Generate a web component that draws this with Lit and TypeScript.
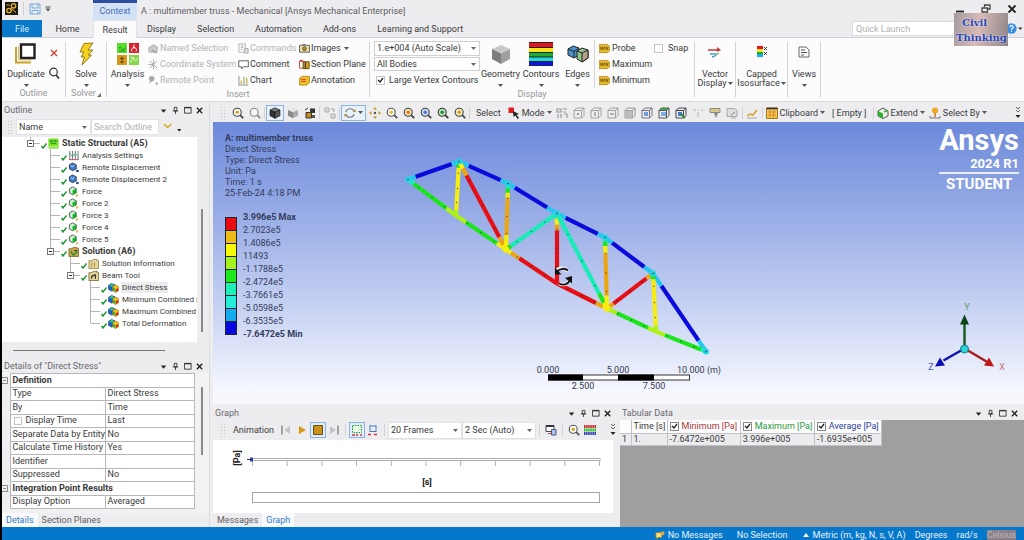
import { LitElement, html, svg, css, nothing } from "lit";
import { customElement } from "lit/decorators.js";
import { classMap } from "lit/directives/class-map.js";

const small = (body: unknown, size = 12) =>
  html`<svg class="ic" width=${size} height=${size} viewBox="0 0 12 12" fill="none" aria-hidden="true">${body}</svg>`;
const big = (body: unknown) =>
  html`<svg class="ic" width="24" height="24" viewBox="0 0 24 24" fill="none" aria-hidden="true">${body}</svg>`;
const caret = html`<svg class="caret" width="5" height="3" viewBox="0 0 5 3" aria-hidden="true"><path d="M0 0h5L2.5 3z" fill="#555" /></svg>`;

const lens = (stroke: string, fill: string, mark: unknown = nothing) => svg`
  <circle cx="5.2" cy="5.2" r="4" fill=${fill} stroke=${stroke} stroke-width="1.1"/>
  <path d="M8.2 8.2l3 3" stroke=${stroke} stroke-width="1.8"/>${mark}`;
const cube = (top: string, left: string, right: string, edge = "none") => svg`
  <path d="M6 .8L11 3 6 5.3 1 3z" fill=${top} stroke=${edge} stroke-width=".6"/>
  <path d="M1 3l5 2.3v6L1 8.8z" fill=${left} stroke=${edge} stroke-width=".6"/>
  <path d="M11 3L6 5.3v6l5-2.5z" fill=${right} stroke=${edge} stroke-width=".6"/>`;
const wire = (c: string, mark: unknown = nothing) => svg`
  <path d="M1 3.5L3.5 1H11v7.5L8.500 11H1zM1 3.500h7.500V11M8.500 3.500L11 1" stroke=${c} stroke-width=".9"/>${mark}`;
const tag = svg`<path d="M.5 1.500h9l2 2v5l-2 2h-9z" fill="#e9b92c" stroke="#a97c00" stroke-width=".7"/>
  <path d="M2 4.200v3.500M3.500 7.700V4.200l1.500 2 1.500-2v3.500M8 4.200l2 3.500M10 4.200L8 7.700" stroke="#5a4200" stroke-width=".8"/>`;

const I = {
  named: svg`<path d="M1 5l5-3 4 2v6H1z" fill="#ccc" stroke="#aaa"/><path d="M4 7l5 4" stroke="#888"/>`,
  coord: svg`<path d="M2 2l8 8M10 2L2 10M6 .5V11M.5 6h5" stroke="#a5a5a5"/>`,
  remote: svg`<circle cx="4" cy="4" r="3" fill="#aaa"/><path d="M1 9l4-3" stroke="#999"/><circle cx="9.500" cy="9.500" r="1.500" fill="#b5b5b5"/>`,
  commands: svg`<path d="M1 1h7v9H1zM3 3h3M3 5h3M3 7h2" stroke="#b0b0b0"/><path d="M7 6h4v5H7z" fill="#ddd" stroke="#aaa"/>`,
  comment: svg`<path d="M.8 2h10.500v6.500H6L4 10.800V8.500H.8z" fill="#fff" stroke="#555"/>`,
  chart: svg`<path d="M1 1v10h10" stroke="#888"/><path d="M3.500 6v4M9.500 3v7" stroke="#c9a94a" stroke-width="1.400"/><path d="M6.500 2v8" stroke="#9fb26a" stroke-width="1.400"/>`,
  images: svg`<path d="M.6 2.500h10.800v7.500H.6z" fill="#f1e3b0" stroke="#555"/><circle cx="6" cy="6.200" r="2.200" fill="#b38f1e" stroke="#444" stroke-width=".7"/><path d="M4 1.500h3" stroke="#555"/>`,
  section: svg`<path d="M.6 2.500h5v7.500h-5z" fill="#fff" stroke="#c33"/><path d="M4.500 3h6.500v7.500H4.500z" fill="#d9a520" stroke="#5a4200"/><path d="M7 3.500v6.500" stroke="#333" stroke-width="1.400"/><path d="M1 1.500h3" stroke="#c00"/>`,
  annot: svg`<path d="M.6 3.500l3-2h7.800v7l-3 2.500H.6z" fill="#f0c022" stroke="#a97c00" stroke-width=".8"/><path d="M2.500 5h5M2.500 7h5" stroke="#c33"/>`,
  steps: svg`<path d="M2 1v10M5 1v10M8 1v10M11 1v10" stroke="#667"/><path d="M1 3l4 4 3-3 3 3" stroke="#3a6"/><path d="M1 10.500h10.500" stroke="#b55"/>`,
  disp: svg`<path d="M1.500 3L5 1l4 2v4.500L5 9.500 1.500 7.500z" fill="#3f7fd0" stroke="#222" stroke-width=".8"/><path d="M3 4l2 1 2-1" stroke="#cfe3ff"/><path d="M9 8.500h2.500V11H9z" fill="#123a8c"/>`,
  force: svg`<path d="M1.500 3L5 1l4 2v4.500L5 9.500 1.500 7.500z" fill="#c9f0cf" stroke="#333" stroke-width=".8"/><path d="M5 5l4-2v4.500L5 9.500z" fill="#14b32c"/><path d="M8.500 11.200l2.500-2" stroke="#d9a520" stroke-width="1.300"/>`,
  system: svg`<path d="M.5 .5h11v11H.5z" fill="#7be02c"/><path d="M1 3.500h10M3 6h6M4 2v3M8 2v3" stroke="#2c9a20"/><path d="M1 9.500h10" stroke="#c5f79a"/>`,
  solution: svg`<path d="M1 3h3.500l1-1.500H10V3h1.500v8.500H1z" fill="#caa24a" stroke="#7a5a1c" stroke-width=".8"/><path d="M3 6l3 4 4-4" stroke="#1e9432" stroke-width="1.500"/><path d="M7 5h3" stroke="#124"/>`,
  info: svg`<path d="M1 3h3.500l1-1.500H10V3h1.500v8.500H1z" fill="#e6d59a" stroke="#8a7434" stroke-width=".8"/><path d="M4 5v5M7 5v5" stroke="#a98f3c"/>`,
  beam: svg`<path d="M1 3h3.500l1-1.500H10V3h1.500v8.500H1z" fill="#e6d59a" stroke="#6b5620" stroke-width=".8"/><path d="M4 9.500V7l4-2M8 5v4.500" stroke="#222" stroke-width="1.200"/>`,
  result: svg`<path d="M.5 3.500L4 1.500l3.500 1.500v5L4 10 .5 8z" fill="#1d63c4" stroke="#16407c" stroke-width=".6"/><path d="M1 3.800L4 2.200l3 1.300-3 1.500z" fill="#2fd06a"/><path d="M5 5l3.200-1.800L11.500 5v4.500L8.200 11.500 5 9.500z" fill="#f1c21b" stroke="#7a6416" stroke-width=".6"/><path d="M8.500 8L11 6.500v3L8.500 11z" fill="#d2281e"/><path d="M5.300 5.800L8 7.500V11L5.300 9.200z" fill="#3fae36"/>`,
};

const bar = {
  frame: svg`<path d="M1 1h4v4H1zM7 7h4v4H7zM7 2h3v3" fill="#ddd" stroke="#aaa"/>`,
  group: svg`<path d="M6 1.500h5v4.500H6z" fill="#333"/><path d="M2 5.500h5.500V11H2z" fill="#c58a1a" stroke="#333"/><path d="M1 3l3-2" stroke="#333"/><path d="M8 8h3v3H8z" fill="#555"/>`,
  rotate: svg`<path d="M1.800 5a4.400 4.400 0 0 1 8.500 0M10.200 7a4.400 4.400 0 0 1-8.500 0" stroke="#7d7d7d" stroke-width="1.200"/><path d="M8.500 5h3.300V2zM3.500 7H.2v3z" fill="#b89a35"/>`,
  pan: svg`<path d="M6 0l2 2.500H4zM6 12l2-2.500H4zM0 6l2.500-2v4zM12 6L9.500 4v4z" fill="#c59a1c"/><circle cx="6" cy="6" r="1.200" fill="#555"/>`,
  pick: svg`<path d="M.5 .5H6V6H.5z" fill="#e01a1a"/><path d="M5 4l6 3-2.500.7L11 11l-1.500 1-2-3.500L5.500 10z" fill="#222"/>`,
  dots: svg`<path d="M1 2h4v3H1zM7 2h4M7 5h3M2 7v4M5 7v4M8 7h3v4" stroke="#9a9a9a" stroke-width="1.200"/>`,
  dim: svg`<path d="M1 3h3M6 3h1M9 3h2M6 5v5" stroke="#c5c5c5" stroke-width="1.300"/>`,
  filter: svg`<path d="M1 1.500h10v4H1z" fill="#e0c983" stroke="#888"/><path d="M5 6h4l-2 5z" fill="#888"/>`,
  note: svg`<path d="M1 1.500h8l2 2v6H1z" fill="#ddd" stroke="#aaa"/><path d="M5 8l4-3" stroke="#888"/><path d="M5 11h5" stroke="#aaa"/>`,
  plot: svg`<path d="M1 9l3-2 3 1 4-5" stroke="#d2a41e" stroke-width="1.500"/><path d="M1 11h10" stroke="#aaa"/>`,
  clip: svg`<path d="M.5 1h11v10.500H.5z" fill="#f2c65a" stroke="#a8781a"/><path d="M.5 1.500h11" stroke="#333" stroke-width="1.600"/><path d="M2 5h8M2 8h8M4 3v8M7.500 3v8" stroke="#d98c1f"/>`,
  extend: svg`<path d="M1 4l5-3 5 3v5l-5 2.500L1 9z" fill="#eee" stroke="#444" stroke-width=".9"/><path d="M1 4l5 2.500v5L1 9z" fill="#2bb52b"/><path d="M7 5l3-1.500" stroke="#2bb52b" stroke-width="1.500"/>`,
  by: svg`<circle cx="6" cy="3.500" r="3" fill="#f0a81e"/><path d="M6 6v4" stroke="#b7791a" stroke-width="1.400"/><path d="M1 9v2h10V9" stroke="#777"/>`,
};

const dot = (c: string) => svg`<circle cx="5.2" cy="5.2" r="1.800" fill=${c}/>`;
type Tool = { i?: unknown; t?: string; boxed?: boolean; caret?: boolean; sep?: boolean; name?: string };
const tools: Tool[] = [
  { i: lens("#444", "#fff", dot("#d9a520")), name: "Zoom in" },
  { i: lens("#888", "#f4f4f4"), name: "Zoom out" }, { sep: true },
  { i: cube("#777", "#333", "#555", "#111"), boxed: true, name: "Shaded with edges" },
  { i: cube("#e6e6e6", "#888", "#aaa"), name: "Shaded" },
  { i: bar.group, name: "Show mesh" }, { sep: true },
  { i: bar.frame, name: "Arrange" }, { sep: true },
  { i: bar.rotate, boxed: true, caret: true, name: "Rotate" },
  { i: bar.pan, name: "Pan" },
  { i: lens("#555", "#fff", dot("#e9b92c")), name: "Zoom" },
  { i: lens("#444", "#f8e3b0", dot("#d97a20")), name: "Box zoom" },
  { i: lens("#444", "#cfdcf5", dot("#4a78c8")), name: "Fit" },
  { i: lens("#333", "#bfe8bf", dot("#1c8c2c")), name: "Zoom to selection" },
  { i: lens("#444", "#f8efc0", dot("#caa21e")), name: "Magnifier" }, { sep: true },
  { t: "Select" }, { i: bar.pick, t: "Mode", caret: true },
  { i: bar.dots, name: "Smart select" },
  { i: wire("#9a9a9a", svg`<circle cx="5" cy="7" r="1" fill="#777"/>`), name: "Vertex" },
  { i: wire("#9a9a9a", svg`<path d="M5 5v4" stroke="#777"/>`), name: "Edge" },
  { i: wire("#9a9a9a", svg`<path d="M3 7h4" stroke="#777"/>`), name: "Face" },
  { i: wire("#8a8a8a", svg`<path d="M1 3.500h7.500V11H1z" fill="#bbb"/>`), name: "Body" },
  { i: wire("#667", svg`<path d="M3 5h4v4H3z" fill="#6d9be0"/>`), name: "Node" },
  { i: wire("#444", svg`<path d="M3 5h5v4H3z" fill="#7aaee8"/><path d="M2 2h8" stroke="#1c8c2c" stroke-width="1.500"/>`), name: "Element face" },
  { i: wire("#333", svg`<path d="M3 5h4v4H3z" fill="#4a78c8"/><path d="M6 7l4 4" stroke="#1c8c2c" stroke-width="1.800"/>`), name: "Element" },
  { i: bar.dim, name: "Hit point" }, { i: bar.filter, name: "Label" }, { i: bar.note, name: "Direction" }, { sep: true },
  { i: bar.plot, name: "Coordinates" }, { sep: true },
  { i: bar.clip, t: "Clipboard", caret: true }, { t: "[ Empty ]" }, { sep: true },
  { i: bar.extend, t: "Extend", caret: true }, { i: bar.by, t: "Select By", caret: true },
];

type Item = { level: number; text: string; icon: unknown; last?: boolean; open?: boolean; bold?: boolean; on?: boolean };
const tree: Item[] = [
  { level: 0, text: "Static Structural (A5)", icon: I.system, last: true, open: true, bold: true },
  { level: 1, text: "Analysis Settings", icon: I.steps },
  { level: 1, text: "Remote Displacement", icon: I.disp },
  { level: 1, text: "Remote Displacement 2", icon: I.disp },
  ...["Force", "Force 2", "Force 3", "Force 4", "Force 5"].map((text) => ({ level: 1, text, icon: I.force })),
  { level: 1, text: "Solution (A6)", icon: I.solution, last: true, open: true, bold: true },
  { level: 2, text: "Solution Information", icon: I.info },
  { level: 2, text: "Beam Tool", icon: I.beam, last: true, open: true },
  { level: 3, text: "Direct Stress", icon: I.result, on: true },
  { level: 3, text: "Minimum Combined S", icon: I.result },
  { level: 3, text: "Maximum Combined S", icon: I.result },
  { level: 3, text: "Total Deformation", icon: I.result, last: true },
];

const details: [string, string?][] = [
  ["Definition"], ["Type", "Direct Stress"], ["By", "Time"], ["Display Time", "Last"],
  ["Separate Data by Entity", "No"], ["Calculate Time History", "Yes"], ["Identifier", ""],
  ["Suppressed", "No"], ["Integration Point Results"], ["Display Option", "Averaged"],
];

const legend = [
  ["#e80c10", "3.996e5 Max"], ["#eebc14", "2.7023e5"], ["#f8f80c", "1.4086e5"], ["#a6f21c", "11493"],
  ["#1cea1c", "-1.1788e5"], ["#1cf0b4", "-2.4724e5"], ["#24ecd8", "-3.7661e5"], ["#14acf0", "-5.0598e5"],
  ["#0808e0", "-6.3535e5"],
];

const P: Record<string, [number, number]> = {
  A: [408, 179], B: [459, 161], C: [508, 183], D: [557, 213], E: [605, 237], F: [653, 273], G: [706, 351],
  H: [456, 215], I: [506, 249], J: [557, 283], K: [607, 308], L: [656, 331],
};
const R = "#e60f14", O = "#eda613", Y = "#f6ee10", YG = "#aef01a", Gn = "#1be61b", Aq = "#18ecb8", Cy = "#22c8f0", Bl = "#0a0adf";
const members: [string, string, [number, string][]][] = [
  ["A", "B", [[0.15, Cy], [0.86, Bl], [1, Cy]]],
  ["B", "C", [[0.2, Cy], [0.85, Bl], [1, Cy]]],
  ["C", "D", [[0.14, Cy], [0.8, Bl], [1, Cy]]],
  ["D", "E", [[0.18, Cy], [0.85, Bl], [1, Cy]]],
  ["E", "F", [[0.15, Cy], [0.82, Bl], [1, Cy]]],
  ["F", "G", [[0.16, Cy], [0.86, Bl], [1, Cy]]],
  ["A", "H", [[0.12, Aq], [0.8, Gn], [1, YG]]],
  ["H", "I", [[0.2, YG], [0.82, Gn], [1, Y]]],
  ["I", "J", [[0.1, Y], [0.26, O], [1, R]]],
  ["J", "K", [[0.78, R], [0.92, O], [1, Y]]],
  ["K", "L", [[0.2, YG], [0.84, Gn], [1, YG]]],
  ["L", "G", [[0.18, YG], [0.9, Gn], [1, Aq]]],
  ["B", "H", [[0.12, Gn], [0.9, Y], [1, YG]]],
  ["B", "I", [[0.08, Y], [0.16, O], [0.86, R], [0.95, O], [1, Y]]],
  ["C", "I", [[0.08, Aq], [0.14, Gn], [0.22, Y], [0.78, O], [1, Y]]],
  ["I", "D", [[0.1, Gn], [1, Aq]]],
  ["D", "J", [[0.07, Aq], [0.16, Y], [0.24, O], [1, R]]],
  ["D", "K", [[0.84, Aq], [0.94, Gn], [1, Y]]],
  ["E", "K", [[0.06, Aq], [0.12, Gn], [0.22, Y], [0.82, O], [1, Y]]],
  ["K", "F", [[0.06, Y], [0.14, O], [0.86, R], [0.94, O], [1, Gn]]],
  ["F", "L", [[0.1, Gn], [0.9, Y], [1, YG]]],
];

const drawMember = ([a, b, stops]: (typeof members)[number]) => {
  const [x1, y1] = P[a], [x2, y2] = P[b];
  const at = (f: number) => [x1 + (x2 - x1) * f, y1 + (y2 - y1) * f];
  let from = 0;
  return svg`${stops.map(([to, c]) => {
    const [sx, sy] = at(from), [ex, ey] = at(to);
    from = to;
    return svg`<line x1=${sx} y1=${sy} x2=${ex} y2=${ey} stroke=${c}/>`;
  })}${[0.22, 0.5, 0.76].map((f) => {
    const [cx, cy] = at(f);
    return svg`<circle cx=${cx} cy=${cy} r=".7" fill="#123" fill-opacity=".7"/>`;
  })}`;
};

@customElement("app-root")
export class AppRoot extends LitElement {
  static styles = css`
    :host { display: flex; flex-direction: column; height: 100vh; box-sizing: border-box; overflow: hidden;
      border-left: 2px solid #000; background: #ededf0; color: #3a3a3a;
      font: 9px/12px Roboto, "Open Sans", sans-serif; position: relative; }
    * { box-sizing: border-box; }
    button, select, input { font: inherit; color: inherit; margin: 0; padding: 0; border: 0; background: none; border-radius: 0; }
    button { display: inline-flex; align-items: center; justify-content: center; }
    svg { display: block; flex: none; }
    .caret { margin-left: 2px; }
    .fill { flex: 1; min-width: 0; }
    .vsep { width: 1px; align-self: stretch; background: #d2d2d6; flex: none; }
    select { appearance: none; border: 1px solid #d0d0d4; background: #fff url("data:image/svg+xml,%3Csvg xmlns='http://www.w3.org/2000/svg' width='5' height='3'%3E%3Cpath d='M0 0h5L2.5 3z' fill='%23666'/%3E%3C/svg%3E") no-repeat right 3px center; padding: 0 10px 0 2px; text-overflow: ellipsis; }
    .tick { appearance: none; width: 9px; height: 9px; border: 1px solid #c4c4c8; background: #fff; flex: none; }
    .tick:checked { background: #fff url("data:image/svg+xml,%3Csvg xmlns='http://www.w3.org/2000/svg' viewBox='0 0 7 7'%3E%3Cpath d='M1 3l2 2 3-4' fill='none' stroke='%23222' stroke-width='1.300'/%3E%3C/svg%3E") center / 7px 7px; }

    .title { display: flex; height: 20px; align-items: stretch; flex: none; }
    .quick { display: flex; width: 91px; gap: 4px; padding: 1px 3px 4px; align-items: center; }
    .quick .vsep { height: 14px; align-self: center; margin: 0 1px; }
    .context { width: 44px; padding-top: 1px; border-top: 3px solid #2d4f9e; background: #d3e2f6; color: #4a6fb5; text-align: center; line-height: 14px; }
    .caption { padding: 5px 0 0 4px; color: #5c5c60; }
    .win { display: flex; gap: 16px; padding: 4px 7px 0 0; height: 14px; }
    .tabs { display: flex; height: 18px; flex: none; border-bottom: 1px solid #d0d2da; align-items: stretch; }
    .tabs button { padding: 0 10px; white-space: nowrap; }
    .tabs .file { width: 40px; background: #0a78c8; color: #d8ecfb; }
    .tabs .home { width: 51px; }
    .tabs .result { width: 44px; background: #fcfcfd; margin-bottom: -1px; border: 1px solid #e0e2ea; border-bottom: 0; }
    .tabs .rest { display: flex; gap: 1px; }
    .tabs input { width: 104px; height: 15px; margin: 1px 0; padding-left: 3px; border: 1px solid #dcdce0; background: #fff; }
    input::placeholder { color: #b0b0b4; opacity: 1; }
    .help { width: 68px; justify-content: flex-end; padding-right: 1px; display: flex; align-items: center; }
    .brand { position: absolute; right: 16px; top: 13px; width: 54px; height: 33px; background: linear-gradient(100deg, #a39ba0, #d9b9b4 45%, #8d8488); color: #2747b8;
      font: bold 10px/15px "DejaVu Serif", serif; padding: 2px 0 0 2px; text-shadow: 0 0 2px #fff; }
    .brand span { display: block; }
    .brand .first { padding-left: 6px; }

    .ribbon { display: flex; height: 64px; flex: none; background: #fcfcfd; border-bottom: 1px solid #dadade; padding-top: 2px; }
    .group { display: flex; flex-direction: column; border-right: 1px solid #d4d4d8; margin: 2px 0 4px; }
    .body { display: flex; height: 48px; margin-top: -2px; }
    .glabel { text-align: center; color: #98989c; line-height: 12px; display: flex; justify-content: center; align-items: center; gap: 1px; }
    .big { display: flex; flex-direction: column; align-items: center; justify-content: flex-start; padding-top: 2px; line-height: 9px; white-space: nowrap; }
    .big span { margin-top: 4px; }
    .big .caret { margin: 5px 0 0; }
    .big span .caret { display: inline-block; vertical-align: middle; margin: 0 0 0 1px; }
    .col { display: flex; flex-direction: column; }
    .col > button, .row { height: 16px; display: flex; align-items: center; justify-content: flex-start; white-space: nowrap; gap: 1px; }
    .off { color: #b2b2b6; }
    .g-outline { width: 64px; } .g-solver { width: 41px; } .g-insert { width: 263px; } .g-display { width: 325px; }
    .g-vector { width: 41px; } .g-capped { width: 52px; } .g-views { width: 33px; }
    .g-vector .big, .g-capped .big, .g-views .big { width: 100%; }
    .w-dup { width: 44px; margin-left: 2px; } .w-full { width: 100%; } .w-ana { width: 41px; }
    .c1 { width: 90px; } .c2 { width: 61px; } .c3 { width: 70px; }
    .side { justify-content: space-around; height: 43px; padding-top: 3px; }
    .combos { width: 106px; margin-left: 4px; padding-top: 1px; gap: 1px; }
    .combos select { height: 15px; width: 106px; }
    .combos .row { padding-left: 2px; gap: 4px; }
    .w-geo { width: 41px; } .w-con { width: 40px; } .w-edg { width: 33px; }
    .probe { border-left: 1px solid #d4d4d8; padding-left: 4px; width: 60px; }
    .probe button { gap: 2px; }
    .snap { gap: 5px; }

    .work { flex: 1; display: flex; min-height: 0; padding-top: 1px; }
    .left { width: 208px; display: flex; flex-direction: column; flex: none; border-right: 1px solid #dcdce0; }
    .right { flex: 1; min-width: 0; display: flex; flex-direction: column; padding-left: 3px; }
    .phead { height: 14px; display: flex; align-items: center; gap: 6px; padding: 0 5px 0 2px; color: #68686c; flex: none; white-space: nowrap; }
    .grip { flex: 1; height: 4px; background: radial-gradient(circle, #c8c8cc 30%, transparent 40%) 0 0 / 2px 2px; }
    .pbtns { display: flex; gap: 4px; }
    .find { height: 20px; display: flex; align-items: center; padding-left: 5px; flex: none; }
    .hgrip { width: 5px; height: 14px; background: radial-gradient(circle, #c4c4c8 35%, transparent 45%) 0 0 / 3px 3px; margin-right: 4px; flex: none; }
    .find select { width: 75px; height: 16px; border-color: #e2e2e6; }
    .find input { width: 68px; height: 16px; background: #fff; border: 1px solid #e2e2e6; padding-left: 2px; }
    .find svg { margin-left: 4px; }
    .scroller { flex: 1; display: flex; min-height: 0; }
    .tree { flex: 1; min-width: 0; background: #fff; overflow: hidden; padding: 0 0 0 18px; margin: 0; list-style: none; font-size: 8px; }
    .tree li { height: 12px; display: flex; align-items: center; white-space: nowrap; }
    .tree .pad1 { padding-left: 20px; } .tree .pad2 { padding-left: 40px; } .tree .pad3 { padding-left: 60px; }
    .tree span { margin-left: 2px; padding: 0 1px; line-height: 11px; }
    .bold { font-weight: 700; }
    .tree .bold { font-size: 9px; }
    .on span { background: #ececee; }
    .vbar { width: 12px; padding: 72px 0 10px 4px; flex: none; }
    .vbar i, .dbar i { display: block; width: 2px; height: 100%; background: #8a8a8e; }
    .hbar { height: 17px; padding: 8px 44px 0 11px; flex: none; }
    .hbar i { display: block; height: 1px; background: #77777b; }
    .dwrap { display: flex; height: 140px; overflow: hidden; flex: none; background: #f2f2f4; }
    .dtable { width: 194px; height: 136px; border-collapse: collapse; table-layout: fixed; background: #fff; line-height: 11px; }
    .dtable td, .dtable th { padding: 0 0 0 2px; border: 1px solid #b8b8bc; text-align: left; font-weight: 400; white-space: nowrap; }
    .dtable th.sect { font-weight: 700; }
    .dtable .gut { width: 8px; border: 0; background: #f0f0f2; padding: 0; }
    .dtable .key { width: 95px; }
    .dtable label { display: flex; align-items: center; gap: 4px; padding-left: 1px; }
    .dtable .tick { width: 8px; height: 8px; }
    .dbar { width: 14px; padding: 14px 0 58px 6px; }
    .btabs { display: flex; height: 14px; flex: none; }
    .btabs button { padding: 0 4px; color: #5e5e62; }
    .btabs .cur { background: #fafafc; color: #2b7cc4; }

    .tools { height: 19px; display: flex; align-items: center; padding: 0 2px 0 7px; flex: none; }
    .tools button { height: 16px; min-width: 17px; padding: 0 2px; white-space: nowrap; gap: 2px; flex: none; }
    .tools .boxed { border: 1px solid #8ab4e4; background: #e9f1fb; }
    .tools .vsep { height: 12px; align-self: center; margin: 0 1px; }
    .tools .caret { margin: 0; }
    .tools .word { padding: 0 5px; flex: none; }

    .view { flex: 1; min-height: 0; position: relative; background: linear-gradient(#6c89da, #9fb2e8 38%, #c6d1f2 65%, #f6f8fe 96%); }
    .scene { position: absolute; inset: 0; width: 100%; height: 100%; }
    .info { position: absolute; left: 12px; top: 11px; line-height: 11px; color: #323c5c; }
    .info p { margin: 0; }
    .legend { margin-top: 18px; display: grid; grid-template-columns: 12px 1fr; column-gap: 6px; grid-auto-rows: 13px; line-height: 10px; }
    .legend .sw { border: 1px solid #223; border-bottom: 0; }
    .legend .end { border-top: 1px solid #223; }
    .legend span { margin-top: -5px; }
    .logo { position: absolute; right: 5px; top: 1px; text-align: right; color: #fff; font-weight: 700; }
    .logo .l1 { font-size: 29px; line-height: 34px; }
    .logo .l2 { font-size: 13px; line-height: 14px; padding-bottom: 1px; border-bottom: 2px solid #e6ecfb; }
    .logo .l3 { font-size: 15px; line-height: 20px; text-align: center; }

    .bottom { display: flex; height: 123px; flex: none; gap: 3px; padding-top: 2px; }
    .graph { width: 404px; display: flex; flex-direction: column; }
    .anim { height: 20px; display: flex; align-items: center; padding-left: 7px; flex: none; }
    .anim button { width: 16px; height: 16px; }
    .anim .boxed { border: 1px solid #8ab4e4; background: #e0ecfa; }
    .anim .word { margin: 0 4px; }
    .anim select { width: 74px; height: 17px; border-color: #e2e2e6; }
    .anim .vsep { height: 12px; align-self: center; margin: 0 3px; }
    .plot { flex: 1; width: 400px; background: #fff; min-height: 0; }
    .tabular { flex: 1; min-width: 0; display: flex; flex-direction: column; }
    .gray { flex: 1; background: #9f9f9f; }
    .data { border-collapse: collapse; table-layout: fixed; width: 262px; line-height: 11px; background: #ececee; }
    .data th { background: #fdfdfd; font-weight: 400; height: 13px; }
    .data td { height: 12px; }
    .data th, .data td { border-right: 1px solid #c2c2c6; border-bottom: 1px solid #c2c2c6; padding: 0 0 0 2px; text-align: left; white-space: nowrap; }
    .data label { display: flex; gap: 3px; align-items: center; }
    .data .tick { border-color: #888; }
    .n0 { width: 11px; } .n1 { width: 36px; } .n2 { width: 73px; } .n3 { width: 74px; } .n4 { width: 67px; }
    .red { color: #a8383c; } .green { color: #2c9a3c; } .blue { color: #2c3c9c; }

    .status { height: 13px; flex: none; background: #0678cc; color: #e6f2fc; display: flex; justify-content: flex-end; align-items: center; gap: 9px; padding: 3px 8px 0 0; line-height: 10px; white-space: nowrap; overflow: hidden; }
    .status span { display: flex; align-items: center; gap: 3px; }
    .status .gap { margin-right: 5px; }
    .status .temp { background: #8a8088; color: #c0b4ba; }
  `;

  private head(title: string) {
    return html`<div class="phead"><span>${title}</span><i class="grip"></i>
      <div class="pbtns">
        ${[
          ["Menu", svg`<path d="M1 3.500h6L4 7z" fill="#222"/>`],
          ["Pin", svg`<path d="M2.500 1h3v4h-3zM1 5h6M4 5v3.500" stroke="#333"/>`],
          ["Maximize", svg`<path d="M.5 1h7.500v6.500H.5z" stroke="#333"/><path d="M.5 1.300h7.500" stroke="#333" stroke-width="1.500"/>`],
          ["Close", svg`<path d="M1 1.500l6 6M7 1.500l-6 6" stroke="#222" stroke-width="1.500"/>`],
        ].map(([n, p]) => html`<button aria-label=${n}><svg width="8" height="9" viewBox="0 0 9 9" fill="none">${p}</svg></button>`)}
      </div></div>`;
  }

  private big(cls: string, icon: unknown, text: string) {
    return html`<button class="big ${cls}">${icon}<span>${text}</span>${caret}</button>`;
  }

  private ribbon() {
    const item = (icon: unknown, t: string, off = false, drop = false) =>
      html`<button class=${classMap({ off })}>${small(icon, 11)}${t}${drop ? caret : nothing}</button>`;
    return html`<section class="ribbon">
      <div class="group g-outline"><div class="body">
        ${this.big("w-dup", big(svg`<path d="M2 5v15.500h15" stroke="#c9a22e" stroke-width="2"/><path d="M4.500 4.500v13.500H18" stroke="#e3c568"/><path d="M7 2.500h13.500V16H7z" fill="#fff" stroke="#222" stroke-width="2.400"/>`), "Duplicate")}
        <div class="col side">
          <button aria-label="Delete">${small(svg`<path d="M3 3l6 6M9 3L3 9" stroke="#d43a34" stroke-width="1.300"/>`)}</button>
          <button aria-label="Find">${small(svg`<circle cx="5.500" cy="5" r="3.800" stroke="#333" stroke-width="1.200"/><path d="M8 8l3 3.500" stroke="#333" stroke-width="1.800"/>`)}</button>
        </div></div><div class="glabel">Outline</div></div>
      <div class="group g-solver"><div class="body">
        ${this.big("w-full", big(svg`<path d="M10 1.500l9-.5-5 7h5l-5 5h3.500L8 23l2.500-8H7l3-5H6z" fill="#f6d21c" stroke="#8a6d12" stroke-width=".9"/>`), "Solve")}
        </div><div class="glabel">Solver<svg width="4" height="8" viewBox="0 0 4 8"><path d="M4 4v4H0z" fill="#5a7a5a"/></svg></div></div>
      <div class="group g-insert"><div class="body">
        ${this.big("w-ana", big(svg`<path d="M1 1h10v10H1z" fill="#56e02e"/><path d="M13 1h10v10H13z" fill="#d8202c"/><path d="M1 13h10v10H1z" fill="#d59a1c"/><path d="M13 13h10v10H13z" fill="#86d84a"/><path d="M2.500 6.500q2-3 3.500 0t3.500-1M3 9h6" stroke="#1d8a1d"/><path d="M18 2.500v4M16 9.500a2.500 2.500 0 1 1 4 0" stroke="#fff"/><path d="M6 14.500v7M4 16.500h4M4 20h4" stroke="#6a4700"/><path d="M14.500 20l3-4 2 3 2.500-3M15 15.500h3" stroke="#eaffda"/>`), "Analysis")}
        <div class="col c1">${item(I.named, "Named Selection", true)}${item(I.coord, "Coordinate System", true)}${item(I.remote, "Remote Point", true)}</div>
        <div class="col c2">${item(I.commands, "Commands", true)}${item(I.comment, "Comment")}${item(I.chart, "Chart")}</div>
        <div class="col c3">${item(I.images, "Images", false, true)}${item(I.section, "Section Plane")}${item(I.annot, "Annotation")}</div>
        </div><div class="glabel">Insert</div></div>
      <div class="group g-display"><div class="body">
        <div class="col combos">
          <select aria-label="Scale"><option>1.e+004 (Auto Scale)</option></select>
          <select aria-label="Bodies"><option>All Bodies</option></select>
          <label class="row"><input type="checkbox" class="tick" checked />Large Vertex Contours</label>
        </div>
        ${this.big("w-geo", big(svg`<path d="M12 3l9 4-9 4.500L3 7z" fill="#c9c9c9"/><path d="M3 7l9 4.500V22l-9-5z" fill="#7d7d7d"/><path d="M21 7l-9 4.500V22l9-5z" fill="#a0a0a0"/>`), "Geometry")}
        ${this.big("w-con", big(svg`<path d="M0 0h24v24H0z" fill="#222"/><path d="M0 1h24v4H0z" fill="#e6141c"/><path d="M0 6h24v4H0z" fill="#f4e51c"/><path d="M0 11h24v3.500H0z" fill="#1fae2a"/><path d="M0 15.500h24v3.500H0z" fill="#1fd8e6"/><path d="M0 20h24v3.500H0z" fill="#1018d8"/>`), "Contours")}
        ${this.big("w-edg", big(svg`<path d="M2 7l5-3 6 2v7l-5 3-6-3z" fill="#4b93cf" stroke="#222"/><path d="M2 7l6 2.500 5-3.500M8 9.500V16" stroke="#222"/><path d="M11 9l5-3 6 2v8l-6 4-5-3z" fill="#8fc38a" stroke="#222"/><path d="M16 11l6-3v8l-6 4z" fill="#b7a08a" stroke="#222"/><path d="M11 9l5 2" stroke="#222"/>`), "Edges")}
        <div class="col probe">${item(tag, "Probe")}${item(tag, "Maximum")}${item(tag, "Minimum")}</div>
        <label class="row snap"><input type="checkbox" class="tick" />Snap</label>
        </div><div class="glabel">Display</div></div>
      <div class="group g-vector"><div class="body"><button class="big">
        ${big(svg`<path d="M5 8h9" stroke="#c33" stroke-width="1.500"/><path d="M14 5l4 3-4 2z" fill="#c33"/><path d="M7 12h7M9 15l3-1" stroke="#4a9ad0" stroke-width="1.400"/><path d="M12 14l4-3" stroke="#4a4"/>`)}
        <span>Vector<br />Display${caret}</span></button></div></div>
      <div class="group g-capped"><div class="body"><button class="big">
        ${big(svg`<path d="M7 4h6v3H7z" fill="#e6141c"/><path d="M7 7h6v3H7z" fill="#f4e51c"/><path d="M7 10h6v2H7z" fill="#1fae2a"/><path d="M7 12h6v3H7z" fill="#1fa8e6"/><path d="M14 5l3 3M17 5l-3 3M14 10l3 3M17 10l-3 3" stroke="#444"/>`)}
        <span>Capped<br />Isosurface${caret}</span></button></div></div>
      <div class="group g-views"><div class="body">
        ${this.big("", big(svg`<path d="M7 5h7l3 3v7H7z" fill="#fff" stroke="#666"/><path d="M9 8h4M9 10.500h6M9 13h3" stroke="#555"/>`), "Views")}</div></div>
    </section>`;
  }

  private outline() {
    return html`${this.head("Outline")}
      <div class="find"><i class="hgrip"></i>
        <select aria-label="Filter by"><option>Name</option></select>
        <input aria-label="Search" placeholder="Search Outline" />
        <svg width="20" height="9" viewBox="0 0 20 9" fill="none"><path d="M1 1l3.500 3.500L8.500 1" stroke="#d9a91e" stroke-width="1.600"/><path d="M14 6h4.500l-2.200 2.500z" fill="#222"/></svg>
      </div>
      <div class="scroller"><ul class="tree">
        ${tree.map((n) => html`<li class=${classMap({ bold: !!n.bold, on: !!n.on, [`pad${n.level}`]: true })}>
          <svg width="20" height="12" viewBox="0 0 20 12" fill="none">
            <path d="M10.500 0V${n.last ? 6 : 12}M10.500 6.500H21" stroke="#b4b4b8"/>
            ${n.open ? svg`<rect x="7.500" y="3.500" width="6" height="6" fill="#fff" stroke="#777"/><path d="M9 6.500h3" stroke="#222"/>` : nothing}
          </svg>
          <svg width="8" height="12" viewBox="0 0 8 12" fill="none"><path d="M1.500 9l1.500 2L6.500 6.500" stroke="#1e9432" stroke-width="1.400"/></svg>
          ${small(n.icon, 11)}<span>${n.text}</span></li>`)}
      </ul><div class="vbar"><i></i></div></div>
      <div class="hbar"><i></i></div>`;
  }

  private detailPane() {
    return html`${this.head('Details of "Direct Stress"')}
      <div class="dwrap"><table class="dtable"><colgroup><col class="gut" /><col class="key" /><col /></colgroup>
        <tbody>${details.map(([k, v]) => html`<tr>
          <td class="gut">${v === undefined ? html`<svg width="6" height="7" viewBox="0 0 6 7" fill="none"><path d="M0 .5h5.500v6H0M1 3.500h3" stroke="#888"/></svg>` : nothing}</td>
          ${v === undefined ? html`<th class="sect" colspan="2">${k}</th>` : html`<th>${k === "Display Time" ? html`<label><input type="checkbox" class="tick" />${k}</label>` : k}</th><td>${v}</td>`}
        </tr>`)}</tbody></table><div class="dbar"><i></i></div></div>
      <div class="btabs"><button class="cur">Details</button><button>Section Planes</button></div>`;
  }

  private toolbar() {
    return html`<div class="tools"><i class="hgrip"></i>
      ${tools.map((t) => t.sep ? html`<i class="vsep"></i>`
        : t.i === undefined ? html`<span class="word">${t.t}</span>`
        : html`<button class=${classMap({ boxed: !!t.boxed })} aria-label=${t.name ?? t.t ?? ""}>${small(t.i)}${t.t ?? nothing}${t.caret ? caret : nothing}</button>`)}
      <i class="fill"></i>
      <svg width="8" height="12" viewBox="0 0 8 12" fill="none"><path d="M2 0l2 2 2-2M2 3l2 2 2-2" stroke="#666"/><path d="M1.500 8h5L4 11z" fill="#222"/></svg>
    </div>`;
  }

  private viewport() {
    const t = (x: number, y: number, s: string, c = "#333a50", a = "middle") => svg`<text x=${x} y=${y} fill=${c} text-anchor=${a} font-size="9">${s}</text>`;
    return html`<div class="view">
      <svg class="scene" viewBox="213 122 811 281" fill="none">
        <g stroke-width="4.200">${members.map(drawMember)}</g>
        ${["A", "B", "C", "D", "E", "F", "G"].map((k) => svg`<circle cx=${P[k][0]} cy=${P[k][1]} r="3" fill="#22d4e4"/><circle cx=${P[k][0]} cy=${P[k][1]} r=".8" fill="#134"/>`)}
        ${["I", "K"].map((k) => svg`<circle cx=${P[k][0]} cy=${P[k][1]} r="3.200" fill=${Y}/>`)}
        <g stroke="#f4f6ff" stroke-width="3.500"><path d="M556 270a8 8 0 0 1 12 1M570 280a8 8 0 0 1-11 3"/></g>
        <g stroke="#111" stroke-width="1.800"><path d="M557 271a8 8 0 0 1 11-1M570 280a8 8 0 0 1-11 3"/></g>
        <path d="M555 267v7h6.500zM572 283v-7.500l-7 2z" fill="#111"/>
        <rect x="548.500" y="374.500" width="141" height="5" fill="#fff" stroke="#333"/>
        <path d="M548 374h35v6h-35zM618 374h36v6h-36z" fill="#000"/>
        ${t(548, 372, "0.000")}${t(618, 372, "5.000")}${t(677, 372, "10.000 (m)", "#333a50", "start")}${t(583, 388, "2.500")}${t(654, 388, "7.500")}
        <g stroke-width="2.500"><path d="M964.500 348V322" stroke="#1c5a24"/><path d="M964.500 348l22 13" stroke="#a81c1c"/><path d="M964.500 348l-21 12" stroke="#1414b4"/></g>
        <path d="M964.500 314l4.500 10h-9z" fill="#0c4416"/><path d="M994 366l-10-1 5-8z" fill="#c01818"/><path d="M935 366l5-9 5 8z" fill="#0c0cb0"/>
        <circle cx="964.500" cy="348.500" r="4" fill="#2cd4dc" stroke="#177"/>
        ${t(967, 309, "Y", "#5aa068")}${t(1002, 369, "X", "#d07080")}${t(931, 369, "Z", "#4a5ab8")}
      </svg>
      <div class="info">
        <p class="bold">A: multimember truss</p><p>Direct Stress</p><p>Type: Direct Stress</p><p>Unit: Pa</p><p>Time: 1 s</p><p>25-Feb-24 4:18 PM</p>
        <div class="legend">
          ${legend.map(([c, s], i) => html`<i class="sw" style="background:${c}"></i><span class=${i ? "" : "bold"}>${s}</span>`)}
          <i class="end"></i><span class="bold">-7.6472e5 Min</span>
        </div>
      </div>
      <div class="logo"><div class="l1">Ansys</div><div class="l2">2024 R1</div><div class="l3">STUDENT</div></div>
    </div>`;
  }

  private graph() {
    const b = (name: string, p: unknown, boxed = false) => html`<button class=${classMap({ boxed })} aria-label=${name}>${small(p)}</button>`;
    return html`<div class="graph">${this.head("Graph")}
      <div class="anim"><i class="hgrip"></i><span class="word">Animation</span>
        ${b("First", svg`<path d="M2 1.500v9" stroke="#888" stroke-width="1.500"/><path d="M10 2v8L4 6z" fill="#c4c4c8"/>`)}
        ${b("Play", svg`<path d="M3 2l7 4-7 4z" fill="#d69a12"/>`)}
        ${b("Stop", svg`<path d="M1.500 1.500h9v9h-9z" fill="#c9921a" stroke="#6d4f10"/>`, true)}
        ${b("Last", svg`<path d="M10 1.500v9" stroke="#888" stroke-width="1.500"/><path d="M2 2v8l6-4z" fill="#c4c4c8"/>`)}
        <i class="vsep"></i>
        ${b("Result sets", svg`<path d="M1.500 1.500h9v7h-9z" fill="#e6ffe6" stroke="#2a9a3a" stroke-dasharray="1.500 1"/><path d="M1 11h3M5 11h2M9 11h2" stroke="#c33" stroke-width="1.300"/>`, true)}
        ${b("Distributed", svg`<path d="M3 1v7M9 1v7M3 2h6M3 7.500h6" stroke="#4a7ac0"/><path d="M1 10.500h3M7 10.500h3" stroke="#c33" stroke-width="1.300"/>`)}
        <i class="vsep"></i>
        <select aria-label="Frames"><option>20 Frames</option></select><select aria-label="Duration"><option>2 Sec (Auto)</option></select>
        <i class="vsep"></i>
        ${b("Export", svg`<path d="M1 1.500h8v6H1z" fill="#fff" stroke="#445"/><path d="M1 2h8" stroke="#334" stroke-width="2"/><path d="M6.500 5.500H11V11H6.500z" fill="#a8c4ee" stroke="#557"/><path d="M3 9.500h3" stroke="#c33"/>`)}
        <i class="vsep"></i>
        ${b("Zoom", lens("#555", "#fff", dot("#d9a520")))}
        ${b("Fringe", svg`<path d="M0 2.500h12" stroke="#c22" stroke-width="3" stroke-dasharray="1.500 .6"/><path d="M0 6h12" stroke="#2b2" stroke-width="3" stroke-dasharray="1.500 .6"/><path d="M0 9.500h12" stroke="#33b" stroke-width="3" stroke-dasharray="1.500 .6"/>`)}
        <i class="fill"></i><svg width="8" height="12" viewBox="0 0 8 12" fill="none"><path d="M2 0l2 2 2-2M2 3l2 2 2-2" stroke="#666"/><path d="M1.500 8h5L4 11z" fill="#222"/></svg>
      </div>
      <svg class="plot" viewBox="0 0 400 73" fill="none">
        <rect x="38" y="18.500" width="349" height="2" stroke="#b0b0b4" fill="#fff"/>
        ${Array.from({ length: 11 }, (_, i) => svg`<path d="M${39.5 + i * 34.7} 21v5" stroke="#b0b0b4"/>`)}
        <path d="M34 19.500h4" stroke="#333"/><path d="M37 17.500h3v4h-3z" fill="#2a3c9c"/>
        <rect x="39.500" y="52.500" width="347" height="10" stroke="#a8a8ac"/>
        <text x="214" y="45" text-anchor="middle" font-size="9" font-weight="700" fill="#222">[s]</text>
        <text transform="translate(27 18) rotate(-90)" text-anchor="middle" font-size="9" font-weight="700" fill="#222">[Pa]</text>
      </svg>
      <div class="btabs"><button>Messages</button><button class="cur">Graph</button></div></div>`;
  }

  private tabular() {
    const h = (cls: string, t: string) => html`<th><label class=${cls}><input type="checkbox" class="tick" checked />${t}</label></th>`;
    return html`<div class="tabular">${this.head("Tabular Data")}
      <div class="gray"><table class="data"><colgroup><col class="n0" /><col class="n1" /><col class="n2" /><col class="n3" /><col class="n4" /></colgroup>
        <thead><tr><th></th><th>Time [s]</th>${h("red", "Minimum [Pa]")}${h("green", "Maximum [Pa]")}${h("blue", "Average [Pa]")}</tr></thead>
        <tbody><tr><td>1</td><td>1.</td><td>-7.6472e+005</td><td>3.996e+005</td><td>-1.6935e+005</td></tr></tbody>
      </table></div></div>`;
  }

  render() {
    return html`
      <header class="title">
        <div class="quick">
          <svg width="13" height="13" viewBox="0 0 13 13" fill="none"><path d="M0 0h13v13H0z" fill="#1a1812"/><circle cx="8.500" cy="3.800" r="2.200" stroke="#e6b422" stroke-width="1.300"/><circle cx="4" cy="8.500" r="2.200" stroke="#e6b422" stroke-width="1.300"/><path d="M6 6.500l5 4M1.500 3h3" stroke="#e6b422"/></svg>
          <i class="vsep"></i>
          <svg width="12" height="12" viewBox="0 0 12 12" fill="none"><path d="M1 1h10v10H1z" fill="#e6f0fa" stroke="#7aa7d4"/><path d="M3 1v4h6V1M3 11V7.500h6V11" stroke="#7aa7d4"/></svg>
          <svg width="6" height="6" viewBox="0 0 6 6" fill="none"><path d="M.5 1h5" stroke="#555"/><path d="M.5 2.500h5L3 5.500z" fill="#555"/></svg>
        </div>
        <div class="context">Context</div>
        <div class="caption">A : multimember truss - Mechanical [Ansys Mechanical Enterprise]</div>
        <i class="fill"></i>
        <div class="win">
          ${[["Minimize", svg`<path d="M1 7.500h8" stroke="#222" stroke-width="1.800"/>`], ["Restore", svg`<path d="M3.500 3V1H9v4H7M1 4h5.500v4H1z" stroke="#444" stroke-width="1.300"/>`], ["Close", svg`<path d="M1.500 1.500l7 7M8.500 1.500l-7 7" stroke="#222" stroke-width="1.800"/>`]].map(([n, p]) => html`<button aria-label=${n}><svg width="10" height="10" viewBox="0 0 10 10" fill="none">${p}</svg></button>`)}
        </div>
      </header>
      <nav class="tabs">
        <button class="file">File</button><button class="home">Home</button><button class="result">Result</button>
        <div class="rest">${["Display", "Selection", "Automation", "Add-ons", "Learning and Support"].map((t) => html`<button>${t}</button>`)}</div>
        <i class="fill"></i><input aria-label="Quick Launch" placeholder="Quick Launch" />
        <div class="help"><svg width="17" height="11" viewBox="0 0 17 11" fill="none"><circle cx="5.500" cy="5.500" r="5.200" fill="#3a8ede"/><path d="M4 4.200q0-1.600 1.600-1.600T7.200 4.200q0 1-1.600 1.800v.8M5.600 7.800v1" stroke="#fff" stroke-width="1.200"/><path d="M12 4.500h4.500L14.200 7z" fill="#333"/></svg></div>
      </nav>
      <div class="brand"><span class="first">Civil</span><span>Thinking</span></div>
      ${this.ribbon()}
      <main class="work">
        <aside class="left">${this.outline()}${this.detailPane()}</aside>
        <div class="right">${this.toolbar()}${this.viewport()}<div class="bottom">${this.graph()}${this.tabular()}</div></div>
      </main>
      <footer class="status">
        <span class="gap">${small(svg`<path d="M1 3h7v6H4l-2 2V9H1z" fill="#f0e08a" stroke="#8a7a2a"/><circle cx="9" cy="4" r="2.500" fill="#d8a83a"/>`, 10)}No Messages</span>
        <span class="gap">No Selection</span>
        <span><svg width="8" height="5" viewBox="0 0 8 5"><path d="M4 0l3 4H1z" fill="#fff"/></svg>Metric (m, kg, N, s, V, A)</span>
        <span>Degrees</span><span>rad/s</span><span class="temp">Celsius</span>
      </footer>`;
  }
}
